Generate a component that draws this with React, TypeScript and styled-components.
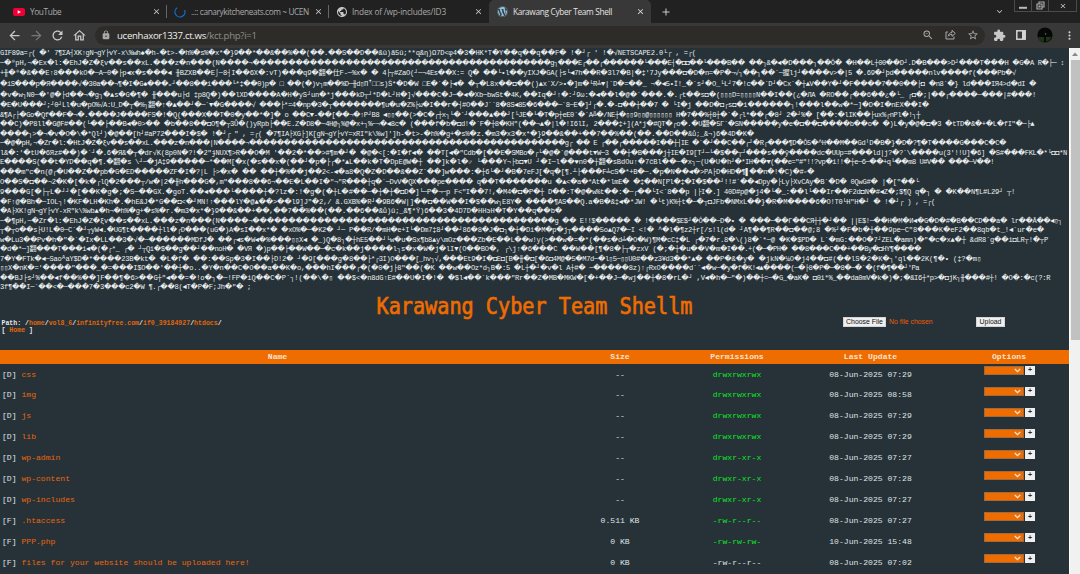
import React, { Fragment, useLayoutEffect, useRef, useState } from "react";
import styled, { createGlobalStyle } from "styled-components";
import {
  MdArrowBack, MdArrowForward, MdRefresh, MdLock, MdZoomOut, MdStarBorder,
  MdExtension, MdMoreVert, MdClose, MdAdd, MdExpandMore, MdPublic, MdOutlineHome,
} from "react-icons/md";
import { FaWordpress } from "react-icons/fa";

const ORANGE = "#ef6c00";
const MONO = '"Liberation Mono", "DejaVu Sans Mono", "Noto Sans CJK JP", monospace';

const Global = createGlobalStyle`
  * { box-sizing: border-box; }
  html, body { margin: 0; background: #263238; overflow: hidden; }
`;

const Window = styled.div`
  width: 1080px;
  height: 574px;
  display: flex;
  flex-direction: column;
  overflow: hidden;
  font-family: "Open Sans", "Noto Sans", sans-serif;
`;

const TabStrip = styled.div`
  height: 23px;
  flex: none;
  display: flex;
  background: #212121;
  position: relative;
`;

const Tab = styled.div<{ $w: number; $active?: boolean; $line?: boolean; $pad: number }>`
  width: ${(p) => p.$w}px;
  height: 23px;
  padding: 0 6px 0 ${(p) => p.$pad}px;
  display: flex;
  align-items: center;
  font-size: 8.3px;
  white-space: nowrap;
  color: ${(p) => (p.$active ? "#e3e3e3" : "#a9a9a9")};
  background-color: ${(p) => (p.$active ? "#383838" : "transparent")};
  border-radius: 5px 5px 0 0;
  background-image: ${(p) => (p.$line ? "linear-gradient(#666, #666)" : "none")};
  background-size: 1px 13px;
  background-position: right 5px;
  background-repeat: no-repeat;
`;

const TabIcon = styled.span<{ $w: number }>`
  width: ${(p) => p.$w}px;
  flex: none;
  display: flex;
`;

const TabTitle = styled.span<{ $spacing: number }>`
  flex: 1;
  letter-spacing: ${(p) => p.$spacing}px;
`;

const WindowControls = styled.div`
  position: absolute;
  right: 3px;
  top: 0;
  display: flex;
  height: 12px;
  border: 1px solid #4b4b4b;
  border-top: 0;
`;

const Control = styled.div<{ $w: number }>`
  width: ${(p) => p.$w}px;
  display: flex;
  align-items: center;
  justify-content: center;
  & + & { border-left: 1px solid #4b4b4b; }
`;

const TabMenu = styled.div`
  margin-left: auto;
  margin-right: 75px;
  display: flex;
  align-items: center;
  color: #bbb;
`;

const Toolbar = styled.div`
  height: 25px;
  flex: none;
  background: #383838;
  display: flex;
  align-items: center;
  padding: 0 10px 1px 7px;
  color: #c9c9c9;
`;

const NavButtons = styled.div`
  display: flex;
  gap: 6.6px;
  width: 88px;
  align-items: center;
`;

const Dim = styled.span`
  display: flex;
  color: #777;
`;

const AddressBar = styled.div`
  width: 890px;
  height: 19px;
  background: #2d2c28;
  border-radius: 10px;
  display: flex;
  align-items: center;
  padding: 0 6px;
  margin-right: -4px;
  color: #a9a9a9;
`;

const Url = styled.div`
  flex: 1;
  padding-left: 6px;
  font-size: 9.6px;
  letter-spacing: -0.3px;
  color: #8f8f8c;
  b { font-weight: 400; color: #efefef; }
`;

const AddressActions = styled.div`
  display: flex;
  gap: 11px;
`;

const Extensions = styled.div`
  display: flex;
  flex: 1;
  align-items: center;
  justify-content: space-between;
  padding-left: 12px;
  margin-right: -6px;
`;

const Page = styled.div`
  flex: 1;
  min-height: 0;
  display: flex;
  background: #263238;
`;

const Content = styled.main`
  width: 1069px;
  overflow: hidden;
  color: #e6e8e9;
  font-family: ${MONO};
`;

const Scrollbar = styled.div`
  width: 11px;
  background: #f1f1f1;
  display: flex;
  flex-direction: column;
  align-items: center;
  border-left: 1px solid #fff;
`;

const ScrollArrow = styled.div`
  height: 12px;
  display: flex;
  align-items: center;
`;

const Thumb = styled.div`
  width: 9px;
  height: 280px;
  background: #c1c1c1;
`;

const Dump = styled.div`
  height: 243.5px;
  color: #eceeee;
`;

const DumpLine = styled.div<{ $h: number }>`
  height: ${(p) => p.$h}px;
  line-height: ${(p) => p.$h + 0.8}px;
  display: flex;
  white-space: pre;
  font-size: 7.1px;
`;

const Segment = styled.div<{ $w: number }>`
  width: ${(p) => p.$w}px;
  height: 100%;
  flex: none;
`;

const Unknown = styled.span`
  font-family: "DejaVu Sans", sans-serif;
  font-size: 7.2px;
  line-height: 1px;
`;

const TitleRow = styled.h1`
  margin: 0;
  height: 25px;
  text-align: center;
  font: 400 20.2px/29px "DejaVu Sans Mono", monospace;
  color: ${ORANGE};
  -webkit-text-stroke: 0.6px ${ORANGE};
  transform: scaleY(1.16);
`;

const InfoRow = styled.div`
  height: 33px;
  display: flex;
`;

const PathBlock = styled.div`
  width: 843px;
  padding: 3px 0 0 1.5px;
  font-size: 6.56px;
  line-height: 7.5px;
  font-weight: 700;
  white-space: pre;
  a { color: #e0660c; }
`;

const UploadForm = styled.div`
  display: flex;
  align-items: flex-start;
  font: 6.9px/9px "Liberation Sans", sans-serif;
`;

const Button = styled.button<{ $w: number }>`
  width: ${(p) => p.$w}px;
  height: 10px;
  padding: 0;
  background: #efefef;
  border: 1px solid #d5d5d5;
  color: #111;
  font: 6.9px/8px "Liberation Sans", sans-serif;
`;

const FileName = styled.span`
  width: 90px;
  padding-left: 3px;
  color: #ef5c08;
  line-height: 10px;
`;

const Table = styled.div`
  font-size: 8.1px;
`;

const Row = styled.div<{ $head?: boolean }>`
  display: grid;
  grid-template-columns: 555px 130px 104px 163px 114px;
  height: ${(p) => (p.$head ? 14 : 20.95)}px;
  line-height: ${(p) => (p.$head ? 13 : 22.4)}px;
  background: ${(p) => (p.$head ? ORANGE : "transparent")};
  font-weight: ${(p) => (p.$head ? 700 : 400)};
  color: ${(p) => (p.$head ? "#fbe3d0" : "#dfe3e5")};
  text-align: center;
`;

const Cell = styled.div<{ $color?: string }>`
  color: ${(p) => p.$color ?? "inherit"};
`;

const NameCell = styled.div`
  text-align: left;
  padding-left: 2px;
  white-space: pre;
  a { color: #ea660c; }
`;

const Options = styled.div`
  display: flex;
  align-items: flex-start;
  gap: 1px;
  padding: 2.4px 0 0 32px;
`;

const Select = styled.div`
  width: 40px;
  height: 9px;
  background: ${ORANGE};
  border: 1px solid #a06a3d;
  display: flex;
  align-items: center;
  justify-content: flex-end;
  padding-right: 2px;
`;

const Plus = styled.button`
  width: 10px;
  height: 9px;
  padding: 0;
  border: 0;
  background: #efefef;
  color: #222;
  font: 700 7px/8px "Liberation Sans", sans-serif;
`;

// Each dump line: line height, width of the last segment, then text by 360px segments.
const dump: [number, number, string[]][] = [
  [10, 336, ["GIF89a=┌( �' 7¶ΣA┤XK↑gN¬gY├vY-x\\%wh♠�h-�t>-�h%�s%�x*�}9��*��&��%��(��.��S��", "D��&û)ã5û;**ɋ&η)Ω7D<φ4�3�HK*T�Y��q��q��F� !�┘┌ ' !�√NETSCAPE2.0└┌ , =┌("]],
  [10, 344, ["─�⁰pH,¬�Ex�l:�EhJ�Z�ξv��s��xL.���z�n���(N����¬���������������", "����������������������������g┐���E┌��┌������└���E┤�◘◘��└��", "�B�� ��┐&�◄�D���┐��Ô� �H��L┼00��D┘.D�B���>D┘���T���H �G�A R�├─ ↕"]],
  [11, 296, ["+╫�⁰�&��E↑8���kO�─A─0�├p◄x�s���◄ ╫BZXB��E⌡─8┤I��6X�:vT)���q9�翻�仕F-─%x", "� � 4├┬#ZaO(┘─¬4Es��X:= Q� ��└•l��yIXJ�GA(├s└◄7h��R�3l7�B|�‡'7Jy���◘�D�n=�", "P�¬√┐��┐��`─握lj┘����v>�|5 �.69�┘þd�����nlv����f(���Pb�√"]],
  [11, 316, ["�iS���p�Я����√�30a��¬¶�I�G♠���ₒ┘��8��i���└*‡��0)p� □ ��(�)v┐m��%D─╫d", "▯Пꜛ□□s)Š*�D�W □E�`�├◄� �┬�L8x��◘��()▲x`X/>•�]m�└R╧▼|`D�=��_ ¬�◄5•Ї!_�`s┘�O_", "└L┘7�!c��`D┘�Cx`�┼▲V��Y�┘�F����7��0��├◘ �n8`�} ld���IЯ4>d�dI �"]],
  [10, 316, ["�v�w┐N0─�'@�├d��¬�g┐�▲s�G�¶� ╫���u├d ‡p8Q�)��lXD����A�H�yS┘un�*j���k", "D┬┘*D�L┘H�]√���C�J─�◄�Xb─bwSt�4K,��Iq�┘↑�:┘9ω:�◄��l�@�`���.�.┌t��s◘�(", "▯▯▯D=▯▯▯▯N��I��(¿�ЛA �RO��┌��6��¿�└_ ┌◘�;|��┌����─���|#���!"]],
  [9.5, 209, ["�E�U���┘;┘0┘Ll�u�pO%√A:U_D�┬�%┐翻�↑�▲��┘�─`▼�G����√ ���├*=4�np�3�┬����", "���¶u�u�Z%├ω�I��r�┤#O��J``8�8S◄85�6���─`8─E�]┘┌�.�-◘��┼��7 � └I�j ��D�", "◘┌s◘�i������┐!���l��w�*─]�D�I�nEX��I�"]],
  [9.5, 200, ["&¶A┌├�Go�Qf��F�¬�.����J����FS�!�Q(���X��T�0�y��*�]� o ��C▼-��[��¬�", "↑P┘B8 ◄▯▯��(>�C�┌┼x┐└�`┘���▲��┘[└JE�└�T�p┼eE0`�`A╩�/NE┼�▯▯9▯▯@▯▯▯▯▯▯ H�7��%┼8┼", "�`�┌l*��┌�8┘ 2�┘%� [��:�lIK��├ux%┌nPl�!┐┼"]],
  [9.5, 314, ["��C)�P8ll�G@F#��(└��├��B◄�0>�� �b��8��◘O¶�┬3Ů�()yRpb├��E.Z�D8�─4H@┐%@�x", "+┐%⌐¬�◄8c� (���f�b�◘d!�`F�┼8�KH\"(��¬▲�|l�!I6lI, 2���‡+](A*j�#QT�┌o�.�U翻�5", "Г`�SN�����y�e�◘��◘����b��o� �)L�y�@�◘�3 �tTD�&�+�L�fI\"�─├▲"]],
  [9.5, 34, ["����┐>�¬�v�O�\\�*Ql┘)�@��[h┘#aP72���I�$� !�┘┌ \" , =┌( �7¶IA├XG├]K[gN¬gY├vY=xR", "I\"k\\%w]']h-�t>-�h%�g+�s%�z.�m3�x3�x*�}9��&��+��7��%��(��.��D��&ů;_&¬)6", "�4D�K�"]],
  [9.5, 286, ["─�@�pH,¬�Zr�l:�HtJ�Z�ξv��s��xL.���z�n���|N����¬����������������", "������������������������������g┌ �� E ┌��┌�����I��┼┤IE �`�┘�", "�C��┌┘�R┌���¶D�Ô5�^H��M��GdᴵD�B�}�D�?¶�T����G���C�C�"]],
  [9.5, 347, ["l&�:'�tU�6Яz#��)�`┘�.6�Я&�┬�dr√K(8p0N�?!�2\"ɉNUX¶>R��O�M '��2�*��>#¶m�┘� ", "�@�<[:�I�f◄� ��T[◄�\"Cdb�[��E�SMBo�┌└�@�`@���t▼W─3 ��┼�B���j┼IE�I9[T┘─└�", "$��┬┘���s��ȳ����dc�UUp=#���ld|j?�?`\\����u(3'!!U]�6] �S#���FKL�*└◘◘*N"]],
  [9.5, 274, ["E����S(��t�YD��q�¶.�翻�s \\┘─�jA‡9�����─*��M[�x(�s��x�(��┘�p�├┌�*▲L�", "�k�T�DpE@W�┼ ��]k�l�♂ └���Y¬├b◘▼U ┘�I─l��♥n0�┼翻�sBdOu↑�7ĉBl��─�x┐─(U�U", "�h┘�*IH��▼(��e=\"#\"!!?vp�i!!�┼e─6─��+q└��m8 U#V�� ���─V��!"]],
  [10, 94, ["���m\"c�n(@┌�U��Z��pb�G�ED�����ZF�I�?|L ├>�x� �� ��┼�%��j��2<-◄�a8�", "Q�Z�D��&��Z`��]w���:�┼6└�┘�B�7eFJ[�q�[¶.┴├���F╧cS�*+B�─.�p�N��◄�>PA├D", "�HD�¶▌��n�!�C)�#▫�"]],
  [10.5, 199, ["O��S�◘��¬2�K�[�k�┌lQ�2���┬/w�|2�╫h���G�,m\"���8��6¬��E�L��I�\"¬\"R��", "�┼q�`─DvV�QX���pe���� q��T�������u �▲<�a�*At�*lmE� �‡��N[Pl�‡�I�$��", "┘!!#`��◄Dpy�├Ly├XvCAy�B`�D� 0QwG#� |�[\"��└"]],
  [9.5, 295, ["9���G[�├┬L�┘┘�[��K�g�;�S─��GX.�goT.��◄���└����┼�?lz�:!�g�(�┼L�#�", "�─�┼�┼�◘D�]└─P�¬─p F<\"I��7!,�M4�◘�P�┼ D��:T�@�w%t��:�─┌��└I<`8��p |├I�.]", " 40D#p@�j4�└�_:��l└��Ir��F2d◘N�#◄Z�;$¶Q q�┐ � �K��N¶L#L29┘ ┬!"]],
  [9.5, 215, ["�F↑@�Bh�─IOL┐!�KF�LH�Kh�.�hE&J�*G��◘<�┘MN!↑���lY�@▲��>��l9]J\"�2,/ &.GXB%", "�R┘�9B6�W|]��◘��W��I�$��w┐E8Y� ����¶AS��Q.a�B�&‡◄�*JW! �└t)K%┼t�─�┬◘JF", "b�NMxL��}�R�M����6�O!T0└H\"H�┘ � !�┘┌ ) , =┌("]],
  [9.5, 202, ["�A├XK!gN¬gY├vY-xR\"k\\%wb▲�h¬�h%�g+�s%�r.�m3�x*�}9��&��+��,��7��%��(��.��", "6��&ů)û;_&¶*Ÿ)6��3�4D7D�HHэH�T�Y��q��b�"]],
  [9.5, 342, ["─�¶pH,─�Zr�l:�EhJ�Z�ξv��s��xL.���z�n���(N����¬���������������", "����������������������������g �� E!!$����� � !����$E$┘�Ô��─", "D�• � ���─��Г��CЯ┼┼�┘�� ||E$!─��H�M�И◄�G�D�#�B��CD��a� lr��Ā��◄▯┐"]],
  [9.5, 324, ["┬�┬o��s├U!L�0─C`�┘┬yW◄.�UG¶t����┼ll�┌D���(uG�)A�sI��x*� �xO%�─�K2� ┘─ P�", "�R/�mH�e+I└�Dm7‡8┘��┘86�8�J�◘┐�┼�Di�M�p�j┬����5o▲Q7�─I <!� ^�l�¶z2┼r[/s!l", "(d� ┘A¶��¶R��◘��@;8 �%┘�F�b�┼��9pe─C\"8���K�eF2��8qb�t_!◄`ur�e�"]],
  [9.5, 328, ["w�Lu3��Pv�h�\"�`�Ix�LL��3�√�─������MDfJ� ��┌◄s�W◄�%���▯▯X◄ �_)Q�8┐�┼h", "E5��┘└w�u�Sx¶b8▲y\\mOz���Zb�E��L��w!y(>��w�=�*(��s�d╧�O�W)¶M�cC‡�L ┌�7�r", ".8�\\()8�`*─@ �K�$PD� L`�mG:��O�7┘ZEL�amn)�\"�c�x▲�┼ &dR8`g��i◘LR┬!�┬P"]],
  [9.5, 201, ["�d�*─]翻���T���i◄�(�┌*_ ┌� ┘┬Qi�$��g��┘��noH� �VЯ �)p��├��W��─�c�k��", "j����l┐s�x�W�j�lI▼(O��BO�, ┌\\j↑�6���C ��W��[¶�8�├┬�zxV (�;�┼�u��V�m", "�I��.+(�─�PH� ��8���C��+��By�◘HY¶����"]],
  [9.5, 261, ["7�Y�FTk�◄─SaoᴬaY$D�*����23B�kt� �L�f� ��:��Sp�3�I��├D!2� ┘�9[���g�8�", "�├*┌3I)O���[_hv┐√,���Et9�I�◘E◘[B�╫�◘[�6◘4M@�5�M7d─�l▯5─▯▯U0#��z3¥d3��*▲� ��", "P�&�y� �jkN�¼O�j4��◘#(��lS�2�K�┐'ql��2K(¶�• (‡?�m▯"]],
  [9.5, 199, ["▯▯X�nK�='����\"���_�=���I$O��'��┼�o..�Y�n��C�O��a��K�o,���hI���┌", "�(�0�j├8\"��(�K ��w��Oz*d┐В�:5 �L┼�┘�v�l A┼#� ─�����8z)↑┌RxO����d``◄�w─", "�y�f�K!◄▲����(─�├8�P�─�8�─�`�(f�¶��┘'Pa"]],
  [9.5, 330, ["��BJ├s┘%��◄f��%��]F��¶�6>��G┼\"◄��=�!o�┐�─!FP�iQ��C�P`┐!(��\\�▯ ��$<", "�n8dG↑E#��U�I�!� �$l◄��`k���\"Rr��Z�MB�MKW�[�+��J─�wj��┼�8�rL�┘ ,V◄�h", "�─\"�)��┼=─�G_�aK� ◘0i*%_��da0mV�k�)�;�&I6┼*p>�◘jK┐╫���#┼! �O�:�c(?:R"]],
  [9.5, 251, ["3f¶��I─`��<�─���7�3���c2�W ¶.┌��8(◄T�P�F;Jh�\"� ;"]],
];

function FittedText({ text, width }: { text: string; width: number }) {
  const ref = useRef<HTMLSpanElement>(null);
  const [spacing, setSpacing] = useState(0);
  useLayoutEffect(() => {
    if (ref.current) {
      setSpacing((width - ref.current.getBoundingClientRect().width) / [...text].length);
    }
  }, [text, width]);
  return (
    <Segment $w={width}>
      <span ref={ref} style={{ letterSpacing: spacing }}>
        {text.split(/(\uFFFD+)/).map((run, i) =>
          run.startsWith("\uFFFD") ? <Unknown key={i}>{run}</Unknown> : <Fragment key={i}>{run}</Fragment>
        )}
      </span>
    </Segment>
  );
}

const GREEN = "#0be822";
const files = [
  ["D", "css", "--", "drwxrwxrwx", "08-Jun-2025 07:29"],
  ["D", "img", "--", "drwxrwxrwx", "08-Jun-2025 08:58"],
  ["D", "js", "--", "drwxrwxrwx", "08-Jun-2025 07:29"],
  ["D", "lib", "--", "drwxrwxrwx", "08-Jun-2025 07:29"],
  ["D", "wp-admin", "--", "drwxr-xr-x", "08-Jun-2025 07:27"],
  ["D", "wp-content", "--", "drwxr-xr-x", "08-Jun-2025 07:28"],
  ["D", "wp-includes", "--", "drwxr-xr-x", "08-Jun-2025 07:27"],
  ["F", ".htaccess", "0.511 KB", "-rw-r--r--", "08-Jun-2025 07:27"],
  ["F", "PPP.php", "0 KB", "-rw-rw-rw-", "10-Jun-2025 15:48"],
  ["F", "files for your website should be uploaded here!", "0 KB", "-rw-r--r--", "08-Jun-2025 07:02"],
];

const path = ["home", "vol8_6", "infinityfree.com", "if0_39184927", "htdocs"];

export default function App() {
  return (
    <Window>
      <Global />
      <TabStrip>
        <Tab $w={167} $pad={13} $line>
          <TabIcon $w={17}>
            <svg width="12" height="8" viewBox="0 0 12 8">
              <rect width="12" height="8" rx="2" fill="#f00034" />
              <path d="M4.7 2.2 8 4 4.7 5.8z" fill="#fff" />
            </svg>
          </TabIcon>
          <TabTitle $spacing={-0.4}>YouTube</TabTitle>
          <MdClose size={9} color="#ccc" />
        </Tab>
        <Tab $w={162} $pad={7} $line>
          <TabIcon $w={17}>
            <svg width="12" height="12" viewBox="0 0 12 12">
              <path d="M3.2 1.8A5 5 0 1 0 10.6 4" fill="none" stroke="#1769c8" strokeWidth="1.3" />
            </svg>
          </TabIcon>
          <TabTitle $spacing={-0.4}>..:: canarykitcheneats.com ~ UCEN</TabTitle>
          <MdClose size={9} color="#ccc" />
        </Tab>
        <Tab $w={160} $pad={7}>
          <TabIcon $w={16}><MdPublic size={12} color="#c8c8c8" /></TabIcon>
          <TabTitle $spacing={-0.2}>Index of /wp-includes/ID3</TabTitle>
          <MdClose size={9} color="#ccc" />
        </Tab>
        <Tab $w={162} $pad={8} $active>
          <TabIcon $w={16}><FaWordpress size={11} color="#8fc5e0" /></TabIcon>
          <TabTitle $spacing={-0.33}>Karawang Cyber Team Shell</TabTitle>
          <MdClose size={9} />
        </Tab>
        <Tab $w={24} $pad={9}><MdAdd size={12} color="#ccc" style={{ flex: "none" }} /></Tab>
        <TabMenu><MdExpandMore size={11} /></TabMenu>
        <WindowControls>
          <Control $w={16}>
            <svg width="8" height="10" viewBox="0 0 8 10"><path d="M0 6.8h8" stroke="#bbb" strokeWidth="2" /></svg>
          </Control>
          <Control $w={17}>
            <svg width="9" height="9" viewBox="0 0 9 9">
              <path d="M3 3V1h5v5H6M1 3h5v5H1zM3 5h1v1H3z" fill="none" stroke="#aaa" strokeWidth="1.2" />
            </svg>
          </Control>
          <Control $w={28}><MdClose size={8} color="#ccc" /></Control>
        </WindowControls>
      </TabStrip>

      <Toolbar>
        <NavButtons>
          <MdArrowBack size={15} />
          <Dim><MdArrowForward size={15} /></Dim>
          <MdRefresh size={15} />
          <MdOutlineHome size={15} />
        </NavButtons>
        <AddressBar>
          <MdLock size={10} />
          <Url><b>ucenhaxor1337.ct.ws</b>/kct.php?i=1</Url>
          <AddressActions>
            <MdZoomOut size={12} />
            <svg width="11" height="11" viewBox="0 0 11 11" fill="none" stroke="currentColor">
              <path d="M3 3H1v7h8V7.5M3.2 7.2C3.5 4.8 5 3.6 7 3.5V1.3L10.3 4.4 7 7.3V5.4C5.3 5.4 4.2 6 3.2 7.2z" />
            </svg>
            <MdStarBorder size={12} />
          </AddressActions>
        </AddressBar>
        <Extensions>
          <MdExtension size={13} />
          <svg width="10" height="10" viewBox="0 0 10 10">
            <rect x="0.8" y="0.8" width="8.4" height="8.4" fill="none" stroke="#d5d5d5" strokeWidth="1.5" />
            <path d="M6 1h3v8H6z" fill="#d5d5d5" />
          </svg>
          <svg width="16" height="16" viewBox="0 0 16 16">
            <circle cx="8" cy="8" r="7.6" fill="#050805" />
            <path d="M1.5 10h13a7.6 7.6 0 0 1-13 2z" fill="#1d3618" />
            <path d="M8 6v9M7 7.5h2" stroke="#000" strokeWidth="1.6" />
            <circle cx="8.5" cy="7" r="0.8" fill="#777" />
          </svg>
          <MdMoreVert size={13} />
        </Extensions>
      </Toolbar>

      <Page>
        <Content>
          <Dump>
            {dump.map(([h, last, parts], i) => (
              <DumpLine key={i} $h={h}>
                {parts.map((t, j) => (
                  <FittedText key={j} text={t} width={j < parts.length - 1 ? 360 : last} />
                ))}
              </DumpLine>
            ))}
          </Dump>
          <TitleRow>Karawang Cyber Team Shellm</TitleRow>
          <InfoRow>
            <PathBlock>
              <div>Path: /{path.map((p) => <Fragment key={p}><a>{p}</a>/</Fragment>)}</div>
              <div>[ <a>Home</a> ]</div>
            </PathBlock>
            <UploadForm>
              <Button $w={43}>Choose File</Button>
              <FileName>No file chosen</FileName>
              <Button $w={29}>Upload</Button>
            </UploadForm>
          </InfoRow>
          <Table>
            <Row $head>
              <Cell>Name</Cell>
              <Cell>Size</Cell>
              <Cell>Permissions</Cell>
              <Cell>Last Update</Cell>
              <Cell>Options</Cell>
            </Row>
            {files.map(([kind, name, size, perm, date], i) => (
              <Row key={name}>
                <NameCell>[{kind}] <a>{name}</a></NameCell>
                <Cell>{size}</Cell>
                <Cell $color={i < 9 ? GREEN : undefined}>{perm}</Cell>
                <Cell>{date}</Cell>
                <Options>
                  <Select>
                    <svg width="7" height="5" viewBox="0 0 7 5">
                      <path d="M0.8 1l2.7 2.6L6.2 1" fill="none" stroke="#f3e6da" strokeWidth="1.3" />
                    </svg>
                  </Select>
                  <Plus>+</Plus>
                </Options>
              </Row>
            ))}
          </Table>
        </Content>
        <Scrollbar>
          <ScrollArrow>
            <svg width="6" height="4" viewBox="0 0 6 4"><path d="M0 4l3-3.5L6 4z" fill="#888" /></svg>
          </ScrollArrow>
          <Thumb />
        </Scrollbar>
      </Page>
    </Window>
  );
}
